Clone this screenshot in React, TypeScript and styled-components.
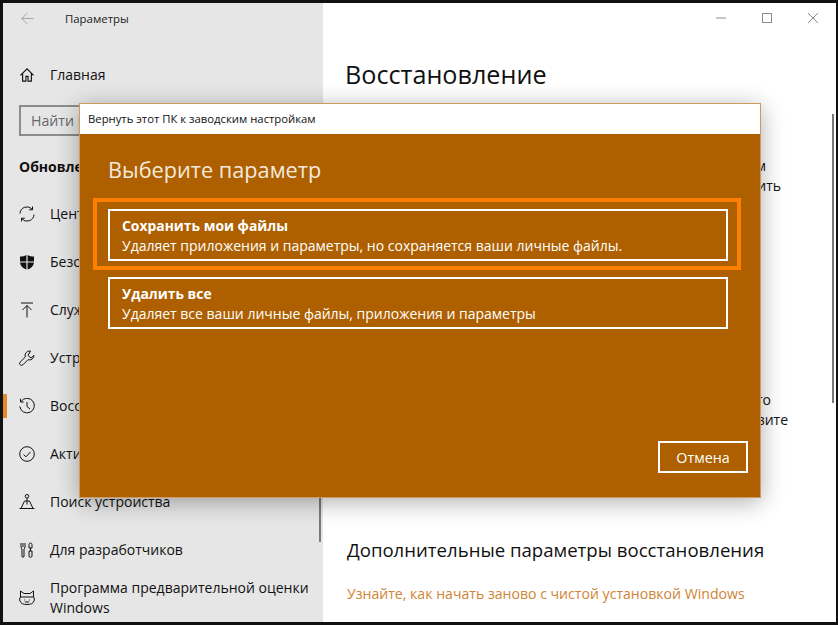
import React from "react";
import styled, { createGlobalStyle } from "styled-components";

const Global = createGlobalStyle`
  html, body { margin: 0; padding: 0; background: #000; }
  body { font-family: "Open Sans", "Noto Sans", sans-serif; }
  * { box-sizing: border-box; }
`;

const Frame = styled.div`
  position: relative;
  width: 838px;
  height: 625px;
  background: #fff;
  border: solid #111;
  border-width: 3px 2px 3px 3px;
  display: flex;
  overflow: hidden;
`;

const Sidebar = styled.aside`
  position: relative;
  width: 320px;
  flex: none;
  background: #e6e6e6;
  color: #111;
  display: flex;
  flex-direction: column;
`;

const TitleRow = styled.div`
  height: 32px;
  display: flex;
  align-items: center;
  padding-left: 18px;
  gap: 31px;
  font-size: 11.4px;
  color: #222;
`;

const BackIcon = styled.span`
  width: 13px;
  height: 13px;
  flex: none;
  display: flex;
  color: #9a9a9a;
`;

const NavRow = styled.div<{ $active?: boolean }>`
  position: relative;
  height: 48px;
  flex: none;
  display: flex;
  align-items: center;
  padding-left: 16px;
  gap: 15px;
  font-size: 14px;
  line-height: 20px;
  color: #111;
  &::before {
    content: "";
    display: ${(p) => (p.$active ? "block" : "none")};
    position: absolute;
    left: 0;
    top: 12px;
    width: 4px;
    height: 24px;
    background: #e08a2c;
  }
`;

const IconBox = styled.span`
  width: 16px;
  height: 16px;
  flex: none;
  display: flex;
  align-items: center;
  justify-content: center;
  color: #111;
`;

const HomeSlot = styled.div`
  margin-top: 17px;
`;

const SearchBox = styled.div`
  margin: 6px 0 0 16px;
  width: 288px;
  height: 32px;
  border: 2px solid #8c8c8c;
  padding: 1px 0 0 10px;
  display: flex;
  align-items: center;
  font-size: 14.2px;
  color: #666;
`;

const Section = styled.div`
  margin-top: 19px;
  margin-bottom: 12px;
  padding-left: 16px;
  height: 24px;
  display: flex;
  align-items: center;
  font-size: 14px;
  font-weight: 700;
  color: #111;
`;

const SideScroll = styled.div`
  position: absolute;
  right: 2px;
  top: 300px;
  bottom: 80px;
  width: 2px;
  background: #7a7a7a;
`;

const Main = styled.main`
  position: relative;
  flex: 1;
  min-width: 0;
  padding-left: 22px;
  display: flex;
  flex-direction: column;
  color: #111;
`;

const WindowControls = styled.div`
  position: absolute;
  top: 10px;
  right: 18px;
  display: flex;
  gap: 36px;
  color: #8c8c8c;
`;

const MainScroll = styled.div`
  position: absolute;
  right: 2px;
  top: 111px;
  height: 289px;
  width: 2px;
  background: #7a7a7a;
`;

const Heading = styled.h1`
  margin: 49px 0 0;
  font-size: 25.2px;
  line-height: 44px;
  font-weight: 400;
  color: #111;
`;

const Copy = styled.p<{ $gap: number }>`
  margin: ${(p) => p.$gap}px 0 0;
  font-size: 14px;
  line-height: 20px;
  white-space: nowrap;
`;

const CopyLine = styled.span<{ $width: number }>`
  display: block;
  width: ${(p) => p.$width}px;
  text-align: right;
`;

const SubHeading = styled.h2`
  margin: 107px 0 0 2px;
  font-size: 18.6px;
  line-height: 26px;
  font-weight: 400;
  color: #111;
  white-space: nowrap;
`;

const Link = styled.a`
  margin: 21px 0 0 2px;
  font-size: 14.1px;
  line-height: 20px;
  color: #cf8436;
  white-space: nowrap;
`;

const Dialog = styled.section`
  position: absolute;
  left: 76px;
  top: 100px;
  width: 682px;
  height: 395px;
  background: #ae6000;
  border: 1px solid #d09a5c;
  box-shadow: 0 4px 22px rgba(0, 0, 0, 0.32);
  display: flex;
  flex-direction: column;
  color: #fff;
`;

const DialogBar = styled.div`
  height: 30px;
  flex: none;
  background: #fff;
  color: #111;
  font-size: 11.3px;
  display: flex;
  align-items: center;
  padding: 0 0 1px 8px;
`;

const DialogBody = styled.div`
  position: relative;
  flex: 1;
  padding: 19px 32px 24px 28px;
  display: flex;
  flex-direction: column;
`;

const DialogTitle = styled.h2`
  margin: 0;
  font-size: 21.7px;
  line-height: 34px;
  font-weight: 400;
  color: #f4eadf;
`;

const Choices = styled.div`
  margin-top: 22px;
  display: flex;
  flex-direction: column;
  gap: 16px;
`;

const Choice = styled.button<{ $focused?: boolean }>`
  position: relative;
  width: 620px;
  height: 52px;
  padding: 1px 0 0 12px;
  background: transparent;
  border: 2px solid #fff;
  color: #fff;
  font-family: inherit;
  text-align: left;
  display: flex;
  flex-direction: column;
  justify-content: center;
  &::after {
    content: "";
    display: ${(p) => (p.$focused ? "block" : "none")};
    position: absolute;
    left: -17px;
    right: -15px;
    top: -13px;
    bottom: -11px;
    border: 4px solid #ff8000;
  }
`;

const ChoiceTitle = styled.span`
  font-size: 13.9px;
  line-height: 20px;
  font-weight: 700;
`;

const ChoiceText = styled.span`
  font-size: 14px;
  line-height: 20px;
`;

const Footer = styled.div`
  margin-top: auto;
  display: flex;
  justify-content: flex-end;
`;

const Cancel = styled.button`
  width: 90px;
  height: 32px;
  background: transparent;
  border: 2px solid #fff;
  color: #fff;
  font-family: inherit;
  font-size: 14.3px;
  padding: 0;
  margin-right: -20px;
`;

const Svg: React.FC<{ children: React.ReactNode; size?: number }> = ({ children, size = 16 }) => (
  <svg width={size} height={size} viewBox="0 0 16 16" fill="none" stroke="currentColor" strokeWidth="1">
    {children}
  </svg>
);

const icons: Record<string, React.ReactNode> = {
  home: <Svg size={14}><path d="M0.5 8.500 8 1l7.500 7.500M3 6v9h3.800V9.500h2.400V15H13V6" strokeWidth="1.300" /></Svg>,
  sync: <Svg><path d="M1 7.500A7 7 0 0 1 13.300 3.300M15 8.500A7 7 0 0 1 2.700 12.700M13.500 0.500v3.300h-3.300M2.500 15.500v-3.300h3.300" /></Svg>,
  shield: <Svg><path fill="currentColor" stroke="none" d="M8.600.9C10.500 2 12.500 2.500 15 2.500V7.400H8.600zM7.400.9V7.400H1V2.500c2.500 0 4.500-.5 6.400-1.600zM1 8.600h6.400v6.900C4 14.500 1.500 12.500 1 8.600zM8.600 8.600H15c-.5 3.900-3 5.900-6.400 6.900z" /></Svg>,
  up: <Svg><path d="M2 1h12M8 15.500V3.500M3.500 8 8 3.500 12.500 8" /></Svg>,
  wrench: <Svg><path d="M10.500 1a4.500 4.500 0 0 0-4.200 6L1.200 12.100a1.900 1.900 0 0 0 2.700 2.700L9 9.700A4.500 4.500 0 0 0 15 5.500l-3 2.500-3-2.500L11.500 1z" /></Svg>,
  history: <Svg><path d="M2 3.500A7.300 7.300 0 1 1 .8 8.500M1.500 .8V4h3.200M8 4v4.500l3 2.500" /></Svg>,
  check: <Svg><circle cx="8" cy="8" r="7.300" /><path d="m4.500 8.500 2.500 2.300 4.500-5" /></Svg>,
  find: <Svg><circle cx="8" cy="2.300" r="1.800" /><path d="M8 4V10.500M5.500 7h5M5.500 7 2 14.500h12L10.500 7M.5 14.500h15" /></Svg>,
  dev: <Svg><path d="M4 1v4M2 1v4c0 1 .7 1.500 1 2v7c0 1.800 2 1.800 2 0V7c.3-.5 1-1 1-2V1M10 2.500c0-2 3-2 3 0V6h-3zM11.500 6v3M10 9h3v5c0 1.800-3 1.800-3 0z" /></Svg>,
  cat: <Svg><path d="M1.500 1 5 3.500h6L14.500 1v6c1 1 1 3 .5 4-1 2.500-3 3.500-7 3.500S2 13.500 1 11c-.5-1-.5-3 .5-4zM1.500 7h13M5 10h.8M10.200 10h.8M6 12h4" /></Svg>,
};

const nav: { icon: string; label: string; active?: boolean }[] = [
  { icon: "sync", label: "Центр обновления Windows" },
  { icon: "shield", label: "Безопасность Windows" },
  { icon: "up", label: "Служба архивации" },
  { icon: "wrench", label: "Устранение неполадок" },
  { icon: "history", label: "Восстановление", active: true },
  { icon: "check", label: "Активация" },
  { icon: "find", label: "Поиск устройства" },
  { icon: "dev", label: "Для разработчиков" },
  { icon: "cat", label: "Программа предварительной оценки Windows" },
];

export default function App() {
  return (
    <>
      <Global />
      <Frame>
        <Sidebar>
          <TitleRow>
            <BackIcon>
              <Svg size={13}><path d="M1 8h14.500M8 1 1 8l7 7" /></Svg>
            </BackIcon>
            <span>Параметры</span>
          </TitleRow>
          <HomeSlot>
            <NavRow><IconBox>{icons.home}</IconBox>Главная</NavRow>
          </HomeSlot>
          <SearchBox>Найти параметр</SearchBox>
          <Section>Обновление и безопасность</Section>
          {nav.map((n) => (
            <NavRow key={n.label} $active={n.active}>
              <IconBox>{icons[n.icon]}</IconBox>
              <span>{n.label}</span>
            </NavRow>
          ))}
          <SideScroll />
        </Sidebar>
        <Main>
          <WindowControls>
            <Svg size={10}><path d="M0 8h16" strokeWidth="1.600" /></Svg>
            <Svg size={10}><rect x=".8" y=".8" width="14.400" height="14.400" strokeWidth="1.600" /></Svg>
            <Svg size={10}><path d="M0 0 16 16M16 0 0 16" strokeWidth="1.600" /></Svg>
          </WindowControls>
          <MainScroll />
          <Heading>Восстановление</Heading>
          <Copy $gap={60}>
            <CopyLine $width={421}>Если компьютер работает неправильно, мы советуем</CopyLine>
            <CopyLine $width={436}>Можно сохранить личные файлы или удалить и обновить</CopyLine>
          </Copy>
          <Copy $gap={194}>
            <CopyLine $width={426}>Запустите компьютер с диска или с другого</CopyLine>
            <CopyLine $width={443}>Параметры загрузки изменятся, затем перезагрузите</CopyLine>
          </Copy>
          <SubHeading>Дополнительные параметры восстановления</SubHeading>
          <Link>Узнайте, как начать заново с чистой установкой Windows</Link>
        </Main>
        <Dialog>
          <DialogBar>Вернуть этот ПК к заводским настройкам</DialogBar>
          <DialogBody>
            <DialogTitle>Выберите параметр</DialogTitle>
            <Choices>
              <Choice $focused>
                <ChoiceTitle>Сохранить мои файлы</ChoiceTitle>
                <ChoiceText>Удаляет приложения и параметры, но сохраняется ваши личные файлы.</ChoiceText>
              </Choice>
              <Choice>
                <ChoiceTitle>Удалить все</ChoiceTitle>
                <ChoiceText>Удаляет все ваши личные файлы, приложения и параметры</ChoiceText>
              </Choice>
            </Choices>
            <Footer>
              <Cancel>Отмена</Cancel>
            </Footer>
          </DialogBody>
        </Dialog>
      </Frame>
    </>
  );
}
